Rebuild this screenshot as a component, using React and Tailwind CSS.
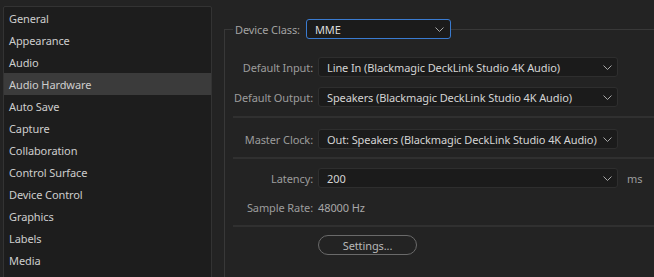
import { useState } from "react";

const sections = [
  "General",
  "Appearance",
  "Audio",
  "Audio Hardware",
  "Auto Save",
  "Capture",
  "Collaboration",
  "Control Surface",
  "Device Control",
  "Graphics",
  "Labels",
  "Media",
];

const Chevron = () => (
  <svg width="9" height="5" viewBox="0 0 9 5" className="shrink-0">
    <polyline
      points="0.5,0.5 4.5,4.5 8.5,0.5"
      fill="none"
      stroke="#a8a8a8"
      strokeWidth="1"
    />
  </svg>
);

const Select = ({ value, className = "" }) => (
  <div
    className={`h-5 flex items-center justify-between pl-2 pr-[5px] rounded-[3px] bg-[#1b1b1b] border border-[#2e2e2e] text-[#d4d4d4] ${className}`}
  >
    <span className="whitespace-nowrap">{value}</span>
    <Chevron />
  </div>
);

const Row = ({ label, children, className = "" }) => (
  <div className={`flex items-center h-5 ${className}`}>
    <span className="w-[80px] shrink-0 text-right text-[#9c9c9c] whitespace-nowrap">
      {label}
    </span>
    <div className="ml-[5px] flex items-center">{children}</div>
  </div>
);

const Divider = ({ className = "" }) => (
  <div className={`h-[2px] bg-[#303030] ${className}`} />
);

export default function App() {
  const [active, setActive] = useState("Audio Hardware");

  return (
    <div
      className="w-[654px] h-[277px] overflow-hidden bg-[#232323] flex text-[11px] tracking-[-0.1px] leading-none"
      style={{ fontFamily: '"Noto Sans", "Open Sans", sans-serif' }}
    >
      {/* sidebar */}
      <div className="ml-[3px] mt-[6px] w-[209px] h-[290px] shrink-0 bg-[#1d1d1d] border border-[#333333] rounded-[2px]">
        {sections.map((name) => (
          <div
            key={name}
            onClick={() => setActive(name)}
            className={`h-[22px] flex items-center pl-[5px] text-[#cdcdcd] ${
              active === name ? "bg-[#3b3b3b]" : ""
            }`}
          >
            {name}
          </div>
        ))}
      </div>

      {/* audio hardware panel */}
      <fieldset className="ml-[12px] mt-[19px] flex-1 min-w-0 border-l border-t border-[#383838] pl-2">
        <legend className="pl-[2px] pr-0 flex items-center h-5">
          <span className="text-[#a2a2a2] whitespace-nowrap">Device Class:</span>
          <div className="ml-[6px] w-[145px] h-5 flex items-center justify-between pl-2 pr-[6px] rounded-[3px] bg-[#1b1b1b] border border-[#3a7bd0] text-[#dadada]">
            <span>MME</span>
            <Chevron />
          </div>
        </legend>

        <div className="pt-[18px]">
          <Row label="Default Input:">
            <Select
              className="w-[300px]"
              value="Line In (Blackmagic DeckLink Studio 4K Audio)"
            />
          </Row>
          <Row label="Default Output:" className="mt-[10px]">
            <Select
              className="w-[300px]"
              value="Speakers (Blackmagic DeckLink Studio 4K Audio)"
            />
          </Row>

          <Divider className="mt-[9px]" />

          <Row label="Master Clock:" className="mt-[11px]">
            <Select
              className="w-[300px]"
              value="Out: Speakers (Blackmagic DeckLink Studio 4K Audio)"
            />
          </Row>

          <Divider className="mt-[8px]" />

          <Row label="Latency:" className="mt-[9px]">
            <Select className="w-[300px]" value="200" />
            <span className="ml-[9px] text-[#9c9c9c]">ms</span>
          </Row>
          <Row label="Sample Rate:" className="mt-[9px]">
            <span className="text-[#a8a8a8]">48000 Hz</span>
          </Row>

          <Divider className="mt-[8px]" />

          <div className="mt-[8px] pl-[85px]">
            <button
              type="button"
              className="w-[99px] h-5 rounded-full border border-[#6a6a6a] bg-[#232323] text-[#b8b8b8] text-[11px] leading-none"
            >
              Settings...
            </button>
          </div>
        </div>
      </fieldset>
    </div>
  );
}
